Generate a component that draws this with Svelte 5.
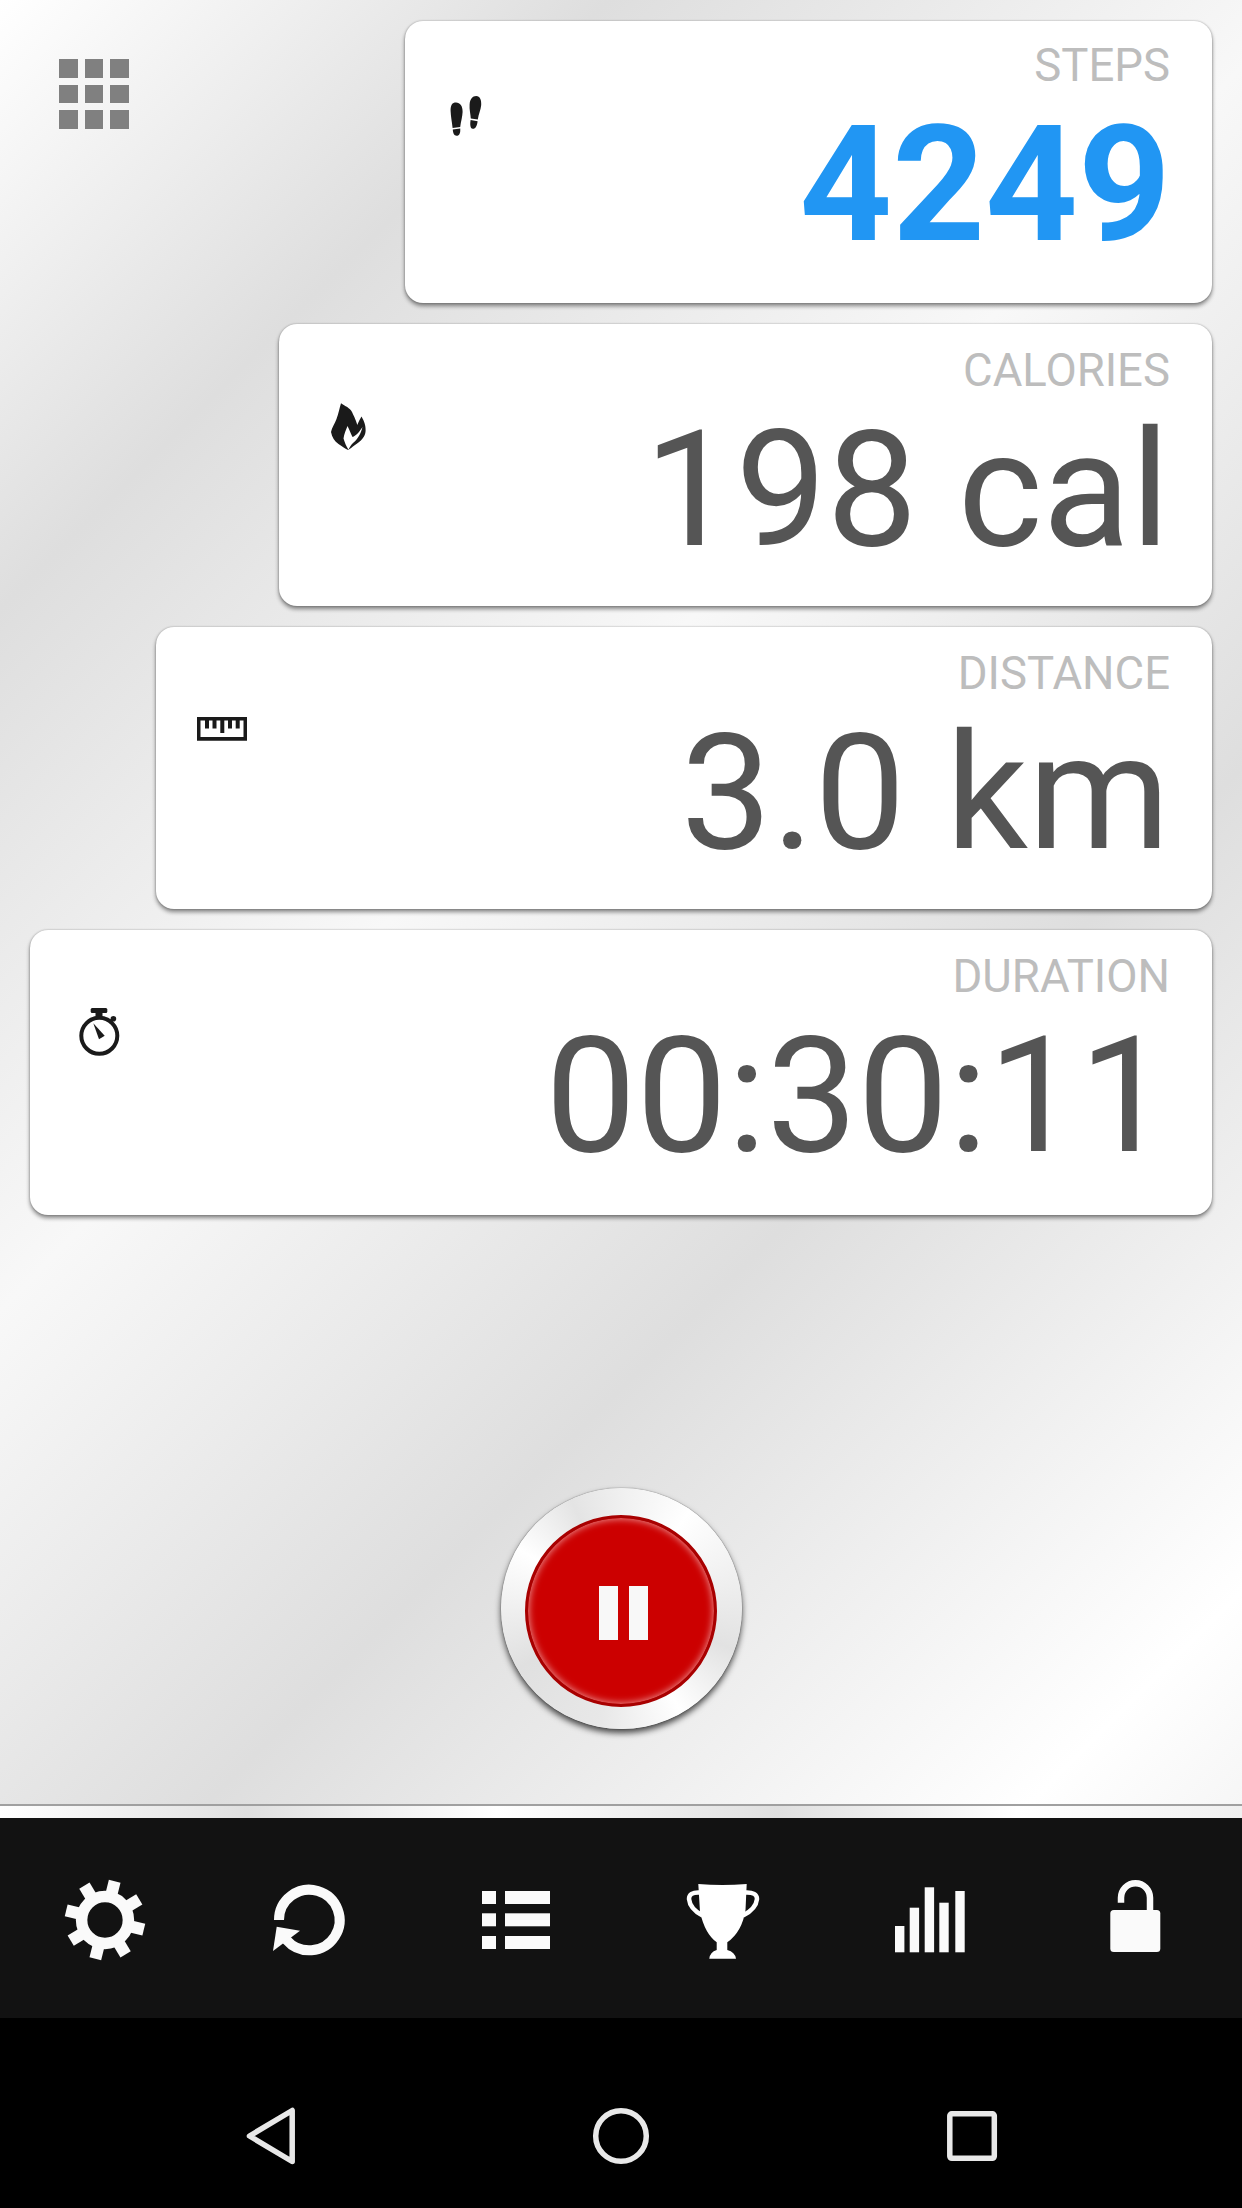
<script lang="ts">
	interface Stat {
		key: string;
		label: string;
		value: string;
		width: number;
		height: number;
	}

	const stats: Stat[] = [
		{ key: 'steps', label: 'STEPS', value: '4249', width: 807, height: 282 },
		{ key: 'calories', label: 'CALORIES', value: '198 cal', width: 933, height: 282 },
		{ key: 'distance', label: 'DISTANCE', value: '3.0 km', width: 1056, height: 282 },
		{ key: 'duration', label: 'DURATION', value: '00:30:11', width: 1182, height: 285 }
	];

	const teeth = [14, 59, 104, 149, 194, 239, 284, 329];
	const cells = [0, 1, 2, 3, 4, 5, 6, 7, 8];
</script>

<div class="screen">
	<main class="main">
		{#each stats as stat, i}
			<div class="row">
				{#if i === 0}
					<button class="grid-btn" aria-label="Menu">
						{#each cells as c}<span class="cell" data-c={c}></span>{/each}
					</button>
				{/if}
				<section class="card {stat.key}" style="width: {stat.width}px; height: {stat.height}px">
					{#if stat.key === 'steps'}
						<svg class="icon" width="32" height="40" viewBox="450 96 32 40">
							<g fill="#1a1a1a">
								<path d="M450.6 111 C450.4 105 452.3 102.5 456 102.5 C460 102.5 462.8 106 462.6 112 C462.4 117 461 121 460.2 127 L452.6 128 C452 122 450.8 117 450.6 111 Z" />
								<path d="M452.8 129.6 L460.2 128.4 C460.6 132.5 459.4 135.8 456.6 135.8 C454 135.8 453 133 452.8 129.6 Z" />
								<path d="M469.6 104.5 C470 99 472.5 96 476.2 96 C480 96 481.6 100 481.2 105 C480.8 110 478.6 114 477.8 119.5 L470.8 118.4 C470.6 114 469.2 110 469.6 104.5 Z" />
								<path d="M470.6 120 L477.6 121.2 C477 126 475.4 129 472.8 128.8 C470 128.6 470 124 470.6 120 Z" />
							</g>
						</svg>
					{:else if stat.key === 'calories'}
						<svg class="icon" width="35" height="47" viewBox="331 403 35 47">
							<path
								fill="#1a1a1a"
								d="M341 403.3 C345 406 350 408 352 412 C354 416 357 423 357.3 425 C358.5 422 360 419 361.5 416.5 C364 421 365.9 425 365.6 431 C365.2 437 361 441 355 445 C352 447 350 449 348.2 450 C345.5 449 342 446.5 338.5 444 C334.5 441 332 437.5 331 432 C331.8 428 335 423 336.5 419 C338.5 414 339.5 408 341 403.3 Z"
							/>
							<path
								fill="#fff"
								d="M347.5 426 C349 429 351 434 352.5 437 C356 436 360 431 362.5 427 C361 433 358 439 353 443 C351 445 349.5 447.5 348.5 449.7 C346.5 447 344.5 442 343.5 438.5 C344 434 346 430 347.5 426 Z"
							/>
						</svg>
					{:else if stat.key === 'distance'}
						<svg class="icon" width="50" height="24" viewBox="197 717 50 24">
							<g fill="#1a1a1a">
								<path fill-rule="evenodd" d="M197 717 H247 V740.7 H197 Z M200.5 720.5 V737 H243.5 V720.5 Z" />
								<rect x="205" y="720" width="4" height="8.5" />
								<rect x="212.5" y="720" width="4" height="8.5" />
								<rect x="220.3" y="720" width="4" height="13" />
								<rect x="228" y="720" width="4" height="8.5" />
								<rect x="235.7" y="720" width="4" height="8.5" />
							</g>
						</svg>
					{:else}
						<svg class="icon" width="42" height="48" viewBox="78 1008 42 48">
							<g fill="#1a1a1a">
								<rect x="90.7" y="1008" width="16.6" height="5" rx="1.5" />
								<rect x="95.5" y="1012" width="7" height="5" />
								<circle cx="113.4" cy="1018.8" r="2.8" />
								<path d="M93.3 1023.3 L104.7 1035.7 L99 1039.3 Z" />
							</g>
							<path d="M109.5 1022.5 L112 1020" stroke="#1a1a1a" stroke-width="3" />
							<circle cx="99.3" cy="1035.8" r="18" fill="none" stroke="#1a1a1a" stroke-width="4" />
						</svg>
					{/if}
					<div class="text">
						<div class="label">{stat.label}</div>
						<div class="value">{stat.value}</div>
					</div>
				</section>
			</div>
		{/each}

		<button class="pause" aria-label="Pause">
			<span class="pause-face">
				<span class="pause-bar"></span>
				<span class="pause-bar"></span>
			</span>
		</button>
	</main>

	<div class="strip"></div>

	<nav class="tabs">
		<svg width="207" height="200" viewBox="0 1818 207 200">
			<circle cx="105" cy="1920" r="23.4" fill="none" stroke="#fafafa" stroke-width="11.5" />
			{#each teeth as deg}
				<rect x="99" y="1880" width="12" height="16" fill="#fafafa" transform="rotate({deg} 105 1920)" />
			{/each}
		</svg>
		<svg width="207" height="200" viewBox="207 1818 207 200">
			<path d="M279 1920 A30.3 30.3 0 1 1 286.5 1940" fill="none" stroke="#fafafa" stroke-width="10" />
			<path d="M276.7 1926.7 L300 1930.7 L273 1951 Z" fill="#fafafa" />
		</svg>
		<svg width="207" height="200" viewBox="414 1818 207 200">
			<g fill="#fafafa">
				<rect x="482" y="1891" width="14" height="13" />
				<rect x="505" y="1891" width="45" height="13" />
				<rect x="482" y="1913.3" width="14" height="13" />
				<rect x="505" y="1913.3" width="45" height="13" />
				<rect x="482" y="1936" width="14" height="13" />
				<rect x="505" y="1936" width="45" height="13" />
			</g>
		</svg>
		<svg width="207" height="200" viewBox="621 1818 207 200">
			<path
				fill="#fff"
				d="M698.3 1884 Q722 1886 746.7 1884 L745.5 1910 Q742 1932 727.3 1942.3 L727.3 1950 Q735 1952 736 1958.7 L709.3 1958.7 Q710 1952 716.7 1950 L716.7 1942.3 Q705 1934 700 1912 Z"
			/>
			<path
				d="M699.5 1892.5 Q689 1892 689 1899 Q690 1909 702.5 1915.5 M745.5 1892.5 Q757 1892 757 1899 Q756 1909 743 1915.5"
				fill="none"
				stroke="#fff"
				stroke-width="4.5"
			/>
		</svg>
		<svg width="207" height="200" viewBox="828 1818 207 200">
			<g fill="#fafafa">
				<rect x="895" y="1926" width="9.4" height="26.3" />
				<rect x="909.7" y="1907.7" width="9.4" height="44.6" />
				<rect x="924.7" y="1887.3" width="9.4" height="65" />
				<rect x="939.3" y="1902.7" width="9.4" height="49.6" />
				<rect x="955.3" y="1891" width="9.4" height="61.3" />
			</g>
		</svg>
		<svg width="207" height="200" viewBox="1035 1818 207 200">
			<path d="M1121 1902.7 V1897.7 A14.5 14.5 0 0 1 1150 1897.7 V1912" fill="none" stroke="#fafafa" stroke-width="6.5" />
			<rect x="1110.3" y="1910" width="50" height="42" rx="3.5" fill="#fafafa" />
		</svg>
	</nav>

	<nav class="system">
		<svg width="350" height="190" viewBox="96 2018 350 190">
			<path d="M292.2 2110.5 V2161.5 L249.5 2136 Z" fill="none" stroke="#e8e8e8" stroke-width="5.5" stroke-linejoin="round" />
		</svg>
		<svg width="350" height="190" viewBox="446 2018 350 190">
			<circle cx="621" cy="2136" r="25.3" fill="none" stroke="#e8e8e8" stroke-width="5.5" />
		</svg>
		<svg width="350" height="190" viewBox="796 2018 350 190">
			<rect x="949.8" y="2113.8" width="44.5" height="44.5" rx="2" fill="none" stroke="#e8e8e8" stroke-width="5.5" />
		</svg>
	</nav>
</div>

<style>
	:global(body) {
		margin: 0;
		font-family: Roboto, 'Liberation Sans', sans-serif;
	}

	.screen {
		width: 1242px;
		height: 2208px;
		display: flex;
		flex-direction: column;
		overflow: hidden;
	}

	.main {
		height: 1806px;
		flex: none;
		box-sizing: border-box;
		padding: 21px 30px 0;
		display: flex;
		flex-direction: column;
		gap: 21px;
		border-bottom: 2px solid #a0a0a0;
		background: linear-gradient(
			135deg,
			#fff 0%,
			#dedede 20%,
			#f8f8f8 43%,
			#dedede 66%,
			#fff 93%,
			#f6f6f6 100%
		);
	}

	.row {
		display: flex;
		justify-content: flex-end;
		position: relative;
	}

	.grid-btn {
		margin: 38px auto 0 29px;
		padding: 0;
		width: 70px;
		height: 70px;
		border: 0;
		background: none;
		display: grid;
		grid-template-columns: repeat(3, 18.6px);
		grid-template-rows: repeat(3, 18.6px);
		justify-content: space-between;
		align-content: space-between;
	}

	.cell {
		background: #808080;
		box-shadow: 0 0 1px rgba(255, 255, 255, 0.6);
	}

	.card {
		background: #fff;
		border-radius: 18px;
		box-shadow: 0 3px 4px rgba(0, 0, 0, 0.45), 0 0 2px rgba(0, 0, 0, 0.3);
		display: flex;
		justify-content: space-between;
		box-sizing: border-box;
		flex: none;
	}

	.icon {
		flex: none;
		display: block;
	}

	.steps .icon {
		margin: 75px 0 0 45px;
	}

	.calories .icon {
		margin: 79px 0 0 52px;
	}

	.distance .icon {
		margin: 90px 0 0 41px;
	}

	.duration .icon {
		margin: 78px 0 0 48px;
	}

	.text {
		text-align: right;
		padding: 21px 42px 0 0;
	}

	.steps .text {
		padding-top: 19px;
	}

	.label {
		font-size: 45.5px;
		line-height: 52px;
		color: #bdbdbd;
	}

	.value {
		font-size: 162px;
		line-height: 176px;
		color: #555;
		margin-top: 5px;
		margin-right: 0;
		white-space: nowrap;
	}

	.steps .value {
		font-weight: 700;
		color: #2196f3;
		margin-right: -1px;
	}

	.pause {
		align-self: center;
		margin-top: 252px;
		width: 241px;
		height: 241px;
		padding: 0;
		border: 0;
		border-radius: 50%;
		display: flex;
		align-items: center;
		justify-content: center;
		background: conic-gradient(
			#f0f0f0 0deg,
			#fff 35deg,
			#e2e2e2 110deg,
			#fff 150deg,
			#e8e8e8 190deg,
			#e0e0e0 240deg,
			#fff 300deg,
			#e4e4e4 335deg,
			#f0f0f0 360deg
		);
		box-shadow: 0 4px 6px rgba(0, 0, 0, 0.7), 0 0 1px #333;
	}

	.pause-face {
		width: 192px;
		height: 192px;
		margin-top: 4px;
		padding: 4px 0 0 4px;
		box-sizing: border-box;
		border-radius: 50%;
		background: #cc0000;
		border: 3px solid #a80000;
		box-shadow: inset 0 0 7px 1px rgba(255, 255, 255, 0.55);
		display: flex;
		align-items: center;
		justify-content: center;
		gap: 11px;
	}

	.pause-bar {
		width: 19px;
		height: 54px;
		background: #f8f8f8;
	}

	.strip {
		height: 12px;
		flex: none;
		background: linear-gradient(
			90deg,
			#fff 0,
			#e0e0e0 247px,
			#fff 497px,
			#e0e0e0 777px,
			#fff 1017px,
			#f0f0f0 1242px
		);
	}

	.tabs {
		height: 200px;
		flex: none;
		display: flex;
		background: #121212;
	}

	.tabs svg,
	.system svg {
		display: block;
		flex: none;
	}

	.system {
		flex: 1;
		display: flex;
		padding-left: 96px;
		background: #000;
	}
</style>
